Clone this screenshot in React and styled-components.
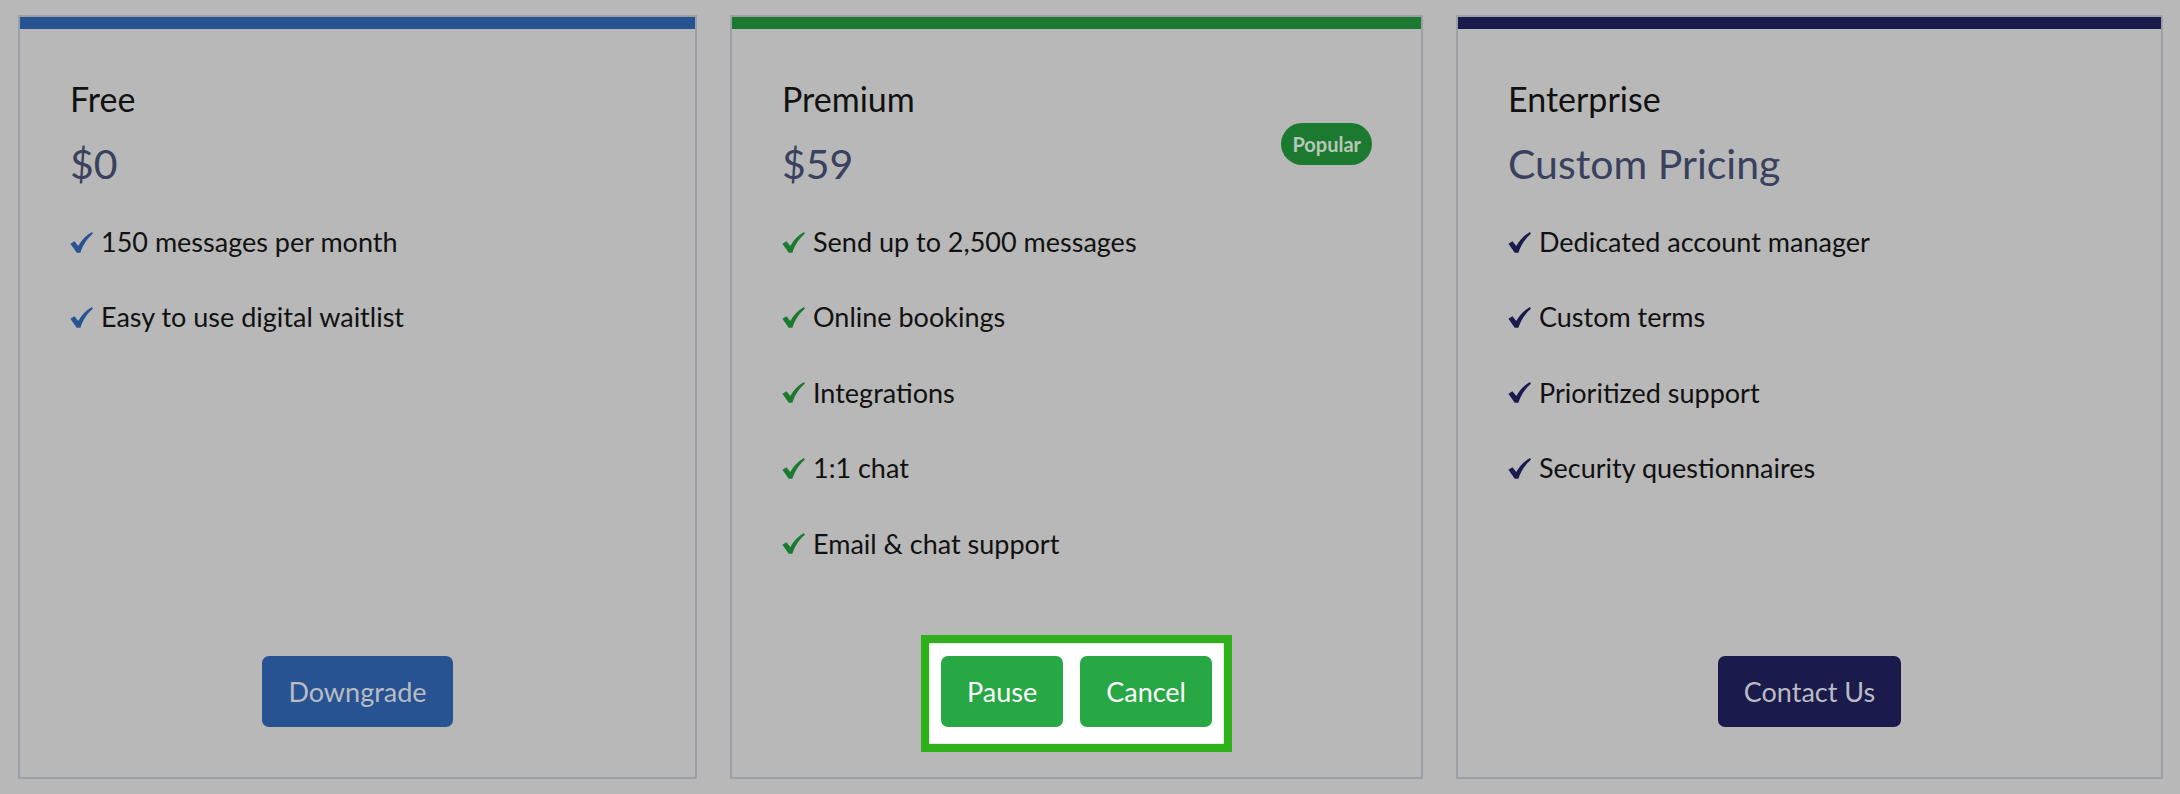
import React from "react"
import styled, { createGlobalStyle } from "styled-components"

const GlobalStyle = createGlobalStyle`
  * {
    box-sizing: border-box;
  }
  body {
    margin: 0;
    background: #b8b8b8;
    font-family: Lato, "Open Sans", sans-serif;
  }
`

const plans = [
  {
    name: "Free",
    price: "$0",
    accent: "#275392",
    width: 679,
    features: ["150 messages per month", "Easy to use digital waitlist"],
    actions: ["Downgrade"],
  },
  {
    name: "Premium",
    price: "$59",
    accent: "#1b7a30",
    width: 693,
    popular: true,
    highlight: true,
    features: [
      "Send up to 2,500 messages",
      "Online bookings",
      "Integrations",
      "1:1 chat",
      "Email & chat support",
    ],
    actions: ["Pause", "Cancel"],
  },
  {
    name: "Enterprise",
    price: "Custom Pricing",
    accent: "#1b1a4c",
    width: 707,
    features: [
      "Dedicated account manager",
      "Custom terms",
      "Prioritized support",
      "Security questionnaires",
    ],
    actions: ["Contact Us"],
  },
]

function Check({ color }) {
  return (
    <CheckIcon viewBox="0 0 24 22" width="23" height="21">
      <path
        fill={color}
        d="M0.4 12.2 L4.6 9.6 L8.6 14.6 C12.2 8.4 16.6 3.4 23 0 L23.9 1.9 C18.2 6.8 13.8 13 10.8 21.7 L7 21.7 Z"
      />
    </CheckIcon>
  )
}

function PlanCard({ plan }) {
  const buttons = plan.actions.map((label) => (
    <Button key={label} $bg={plan.highlight ? "#28a745" : plan.accent} $light={plan.highlight}>
      {label}
    </Button>
  ))

  return (
    <Card>
      <Bar $color={plan.accent} />
      {plan.popular && <Badge>Popular</Badge>}
      <Body>
        <Title>{plan.name}</Title>
        <Price>{plan.price}</Price>
        <Features>
          {plan.features.map((f) => (
            <Feature key={f}>
              <Check color={plan.accent} />
              <span>{f}</span>
            </Feature>
          ))}
        </Features>
        <Footer>
          {plan.highlight ? <Highlight>{buttons}</Highlight> : buttons}
        </Footer>
      </Body>
    </Card>
  )
}

export default function App() {
  return (
    <>
      <GlobalStyle />
      <Page>
        {plans.map((p) => (
          <PlanCard key={p.name} plan={p} />
        ))}
      </Page>
    </>
  )
}

const Page = styled.main`
  display: grid;
  grid-template-columns: 679fr 693fr 707fr;
  gap: 33px;
  height: 794px;
  padding: 15px 17px 15px 18px;
`

const Card = styled.section`
  position: relative;
  display: flex;
  flex-direction: column;
  border: 2px solid #9aa0a6;
`

const Bar = styled.div`
  height: 12px;
  background: ${(p) => p.$color};
`

const Badge = styled.span`
  position: absolute;
  top: 106px;
  right: 49px;
  display: inline-flex;
  align-items: center;
  height: 42px;
  padding: 0 11px;
  border-radius: 21px;
  background: #1b7a30;
  color: #b9c6ba;
  font-size: 20px;
  font-weight: 700;
`

const Body = styled.div`
  flex: 1;
  display: flex;
  flex-direction: column;
  padding: 50px 50px 50px;
`

const Title = styled.h3`
  margin: 0;
  font-size: 34px;
  font-weight: 400;
  line-height: 1.2;
  color: #111;
`

const Price = styled.div`
  margin-top: 19px;
  font-size: 41px;
  line-height: 1.2;
  color: #39415f;
`

const Features = styled.ul`
  display: flex;
  flex-direction: column;
  gap: 43px;
  margin: 38px 0 0;
  padding: 0;
  list-style: none;
`

const Feature = styled.li`
  display: flex;
  align-items: center;
  gap: 8px;
  font-size: 27px;
  line-height: 1.2;
  color: #111;
`

const CheckIcon = styled.svg`
  flex: none;
`

const Footer = styled.div`
  margin-top: auto;
  display: flex;
  justify-content: center;
`

const Highlight = styled.div`
  display: flex;
  gap: 17px;
  margin: -21px 0 -25px;
  padding: 13px 12px 17px;
  background: #fff;
  border: 8px solid #2eb01b;
  box-shadow: inset 0 0 2px rgba(0, 0, 0, 0.35);
`

const Button = styled.button`
  height: 71px;
  padding: 0 26px;
  border: none;
  border-radius: 7px;
  background: ${(p) => p.$bg};
  color: ${(p) => (p.$light ? "#fff" : "#b9bcc2")};
  font-family: inherit;
  font-size: 27px;
  cursor: pointer;
`
